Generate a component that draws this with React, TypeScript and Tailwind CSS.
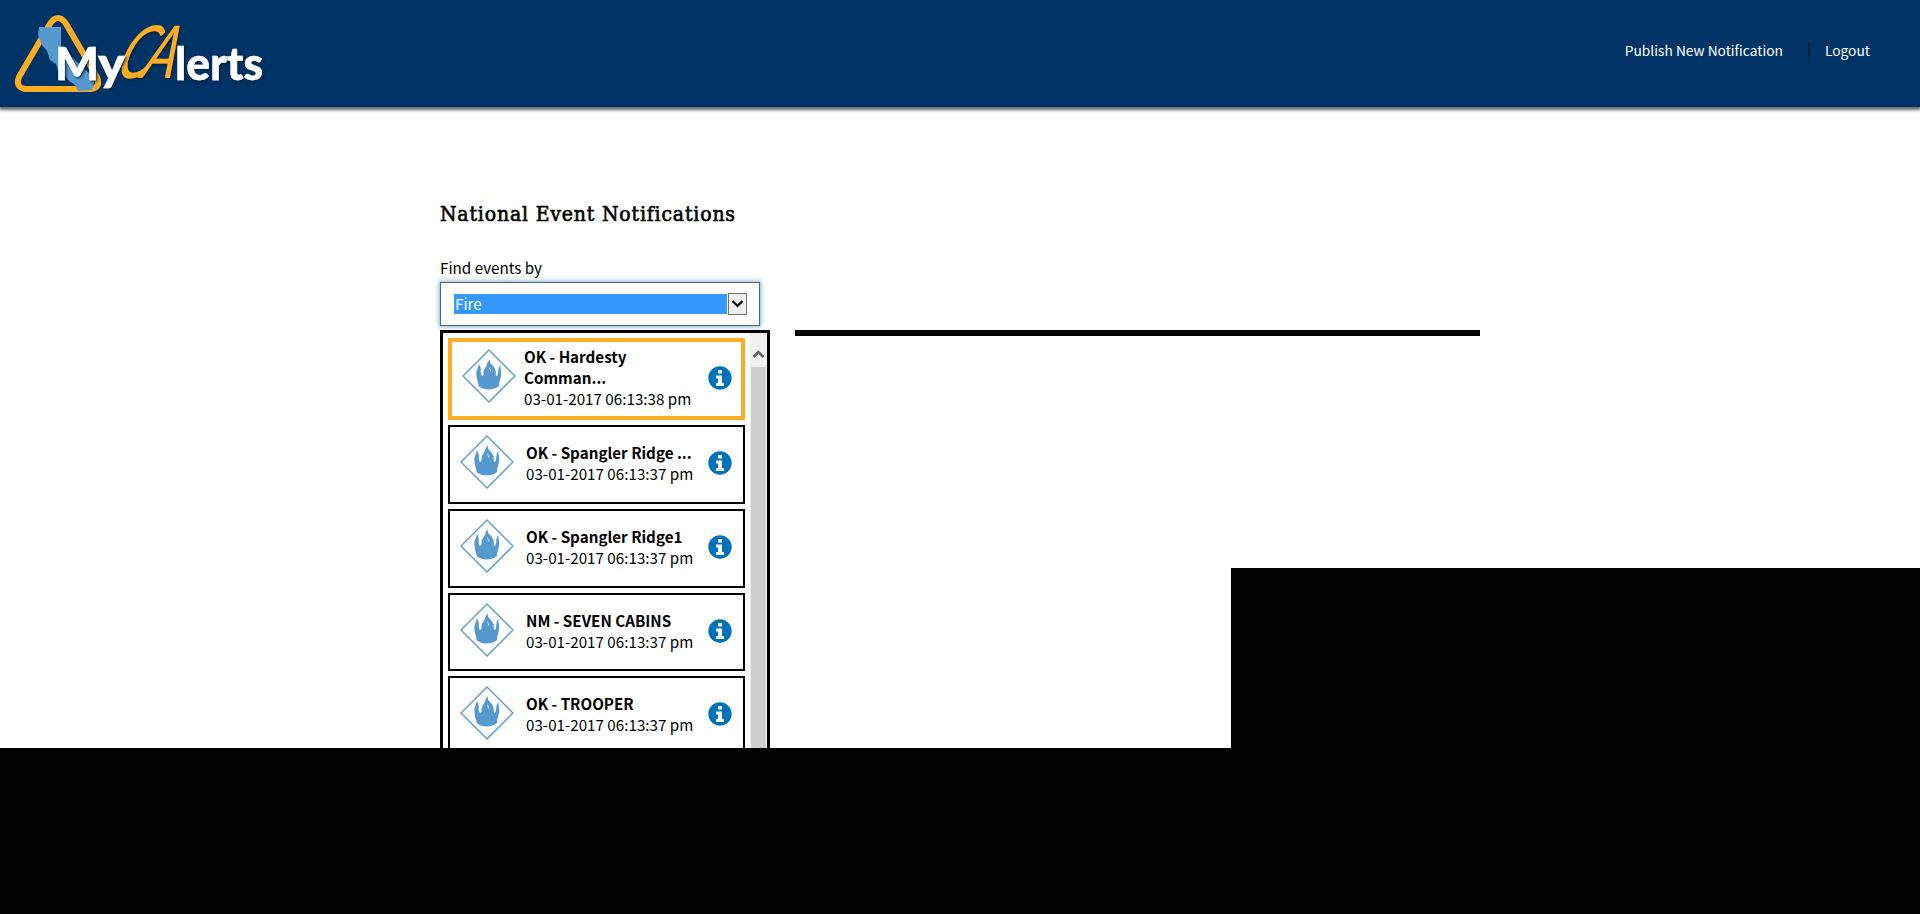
import React from "react";

const sans = "font-['Noto_Sans_CJK_SC',sans-serif]";

type EventItem = { title: string[]; date: string; height: string; active?: boolean };

const events: EventItem[] = [
  { title: ["OK - Hardesty", "Comman..."], date: "03-01-2017 06:13:38 pm", height: "h-[82px]", active: true },
  { title: ["OK - Spangler Ridge ..."], date: "03-01-2017 06:13:37 pm", height: "h-[79px]" },
  { title: ["OK - Spangler Ridge1"], date: "03-01-2017 06:13:37 pm", height: "h-[79px]" },
  { title: ["NM - SEVEN CABINS"], date: "03-01-2017 06:13:37 pm", height: "h-[78px]" },
  { title: ["OK - TROOPER"], date: "03-01-2017 06:13:37 pm", height: "h-[79px]" },
];

function Logo() {
  return (
    <svg width="290" height="106" viewBox="0 0 290 106" className="block">
      <defs>
        <filter id="sh" x="-10%" y="-10%" width="130%" height="130%">
          <feDropShadow dx="1.5" dy="1.5" stdDeviation="0.8" floodColor="#001a33" floodOpacity="0.85" />
        </filter>
      </defs>
      <path d="M50.5 23 Q58 13 65.500 23 L97 77 Q101 88 91 89 L25 89 Q15 87 19 77 Z" fill="none" stroke="#fdad23" strokeWidth="6" strokeLinejoin="round" />
      <path d="M39 27 L61 27 L61 47 L92 76 L94 82 L92 90 L78 91 L75 85 L68 80 L64 74 L58 70 L56 64 L50 60 L47 51 L42 45 L38 35 Z" fill="#5699cf" />
      <g filter="url(#sh)" fontFamily="Lato, sans-serif" fontStyle="italic" fontWeight="400" fill="#fdad23">
        <text transform="translate(113 77.500) skewX(-22)" fontSize="73" textLength="33" lengthAdjust="spacingAndGlyphs">C</text>
        <text transform="translate(139 77.500) skewX(-20)" fontSize="73" textLength="33" lengthAdjust="spacingAndGlyphs">A</text>
      </g>
      <g filter="url(#sh)" fontFamily="Lato, sans-serif" fontWeight="900" fill="#fff" stroke="#fff" strokeWidth="0.4">
        <text x="55" y="80" fontSize="45" textLength="44" lengthAdjust="spacingAndGlyphs">M</text>
        <text x="98" y="80" fontSize="45" textLength="27" lengthAdjust="spacingAndGlyphs">y</text>
        <text x="175" y="80" fontSize="45" textLength="88" lengthAdjust="spacingAndGlyphs">lerts</text>
      </g>
    </svg>
  );
}

function FireIcon() {
  return (
    <svg width="54" height="54" viewBox="0 0 54 54" className="block shrink-0">
      <path d="M27 1 L53 27 L27 53 L1 27 Z" fill="none" stroke="#5699cf" strokeWidth="1.300" />
      <path d="M16.500 15 C17 19 13.500 21 14.500 26 C14.500 31 16.500 33 16.500 37 C21 41.500 32 41.500 37 37 C37 32 39 30 39 26 C40 21 37.500 19 38.800 16 C35 18.500 37.500 23 35 27 C33.800 27.500 33.500 26 33.800 24.500 C34.200 21 32.500 19.500 31.500 17.500 C29.500 15.500 27 14 28 10.500 C25 12.500 25.500 16 23.500 18.500 C22 20.500 21 22.500 21.500 25.500 C21 27.500 19.500 27 19 25.500 C18.300 22 20 18.500 16.500 15 Z" fill="#5699cf" />
      <path d="M27.600 17.500 C27.500 19.500 29.600 20.500 29 23.500 C28.500 21.500 26.800 20 27.600 17.500 Z" fill="#fff" />
    </svg>
  );
}

function InfoIcon() {
  return (
    <svg width="24" height="24" viewBox="0 0 24 24" className="block shrink-0">
      <circle cx="12" cy="12" r="11.700" fill="#0071bc" />
      <path d="M10 4h4v3.500h-4z M8 9.500h6v7.500h2v3H8v-3h2v-4.500H8z" fill="#fff" />
    </svg>
  );
}

function EventCard({ event }: { event: EventItem }) {
  return (
    <div className={`flex w-[297px] shrink-0 bg-white pl-[10px] ${event.height} ${event.active ? "border-4 border-[#fdad23]" : "border-2 border-black"}`}>
      <div className={event.active ? "pt-[7px]" : "pt-[8px]"}>
        <FireIcon />
      </div>
      <div className={`shrink-0 whitespace-nowrap text-[15.200px] leading-[21px] text-black ${event.active ? "w-[192px] pl-[8px] pt-[4px]" : "w-[194px] pl-[12px] pt-[15px]"}`}>
        {event.title.map((line) => (
          <div key={line} className="font-bold">{line}</div>
        ))}
        <div>{event.date}</div>
      </div>
      <div className="pt-[24px]">
        <InfoIcon />
      </div>
    </div>
  );
}

export default function App() {
  return (
    <div className={`flex h-[914px] w-[1920px] flex-col overflow-hidden bg-white text-black ${sans}`}>
      <header className="z-10 flex h-[107px] shrink-0 justify-between bg-[#003366] shadow-[0_2px_3px_1px_rgba(0,0,0,0.6)]">
        <Logo />
        <nav className="flex h-[26px] items-center pr-[50px] pt-[51px] text-[13.750px] text-white">
          <a className="-mt-[2px] leading-[20px]">Publish New Notification</a>
          <span className="ml-[25px] h-[17px] w-[2px] bg-[#0a2238]" />
          <a className="-mt-[2px] ml-[15px] leading-[20px]">Logout</a>
        </nav>
      </header>
      <main className="flex h-[641px] shrink-0 overflow-hidden pl-[440px]">
        <section className="flex w-[330px] shrink-0 flex-col">
          <h1 className="mt-[91px] h-[32px] whitespace-nowrap font-['DejaVu_Serif_Condensed','DejaVu_Serif',serif] text-[21px] leading-[32px] tracking-[0.820px] [-webkit-text-stroke:0.600px_#000]">National Event Notifications</h1>
          <label className="mt-[24px] h-[28px] text-[15.200px] leading-[26px]">Find events by</label>
          <div className="flex h-[44px] w-[320px] items-center border border-[#5b616b] bg-white pl-[13px] shadow-[0_0_4px_1px_rgba(62,148,207,0.7)]">
            <div className="h-[20px] w-[273px] bg-[#3399ff] pl-[1px] text-[15.200px] leading-[19px] text-white">Fire</div>
            <div className="ml-[1px] flex h-[22px] w-[19px] items-center justify-center border border-[#707070] bg-[#f0f0f0]">
              <svg width="13" height="10" viewBox="0 0 13 10"><path d="M1.500 2 L6.500 7 L11.500 2" fill="none" stroke="#000" strokeWidth="2.200" /></svg>
            </div>
          </div>
          <div className="mt-[4px] flex h-[418px] shrink-0 justify-between overflow-hidden border-x-[3px] border-t-[3px] border-black">
            <div className="flex flex-col gap-[5px] pl-[5px] pt-[5px]">
              {events.map((event, i) => (
                <EventCard key={i} event={event} />
              ))}
            </div>
            <div className="flex w-[17px] flex-col bg-[#f0f0f0]">
              <div className="flex h-[34px] items-end justify-center pb-[8px]">
                <svg width="13" height="10" viewBox="0 0 13 10"><path d="M1.500 8 L6.500 3 L11.500 8" fill="none" stroke="#606060" strokeWidth="2.600" /></svg>
              </div>
              <div className="mx-[1px] flex-1 bg-[#cdcdcd]" />
            </div>
          </div>
        </section>
        <section className="flex flex-1 flex-col pl-[25px]">
          <div className="mt-[223px] h-[6px] w-[685px] shrink-0 bg-black" />
          <div className="mt-auto h-[180px] w-[689px] shrink-0 self-end bg-black" />
        </section>
      </main>
      <div className="flex-1 bg-black" />
    </div>
  );
}
